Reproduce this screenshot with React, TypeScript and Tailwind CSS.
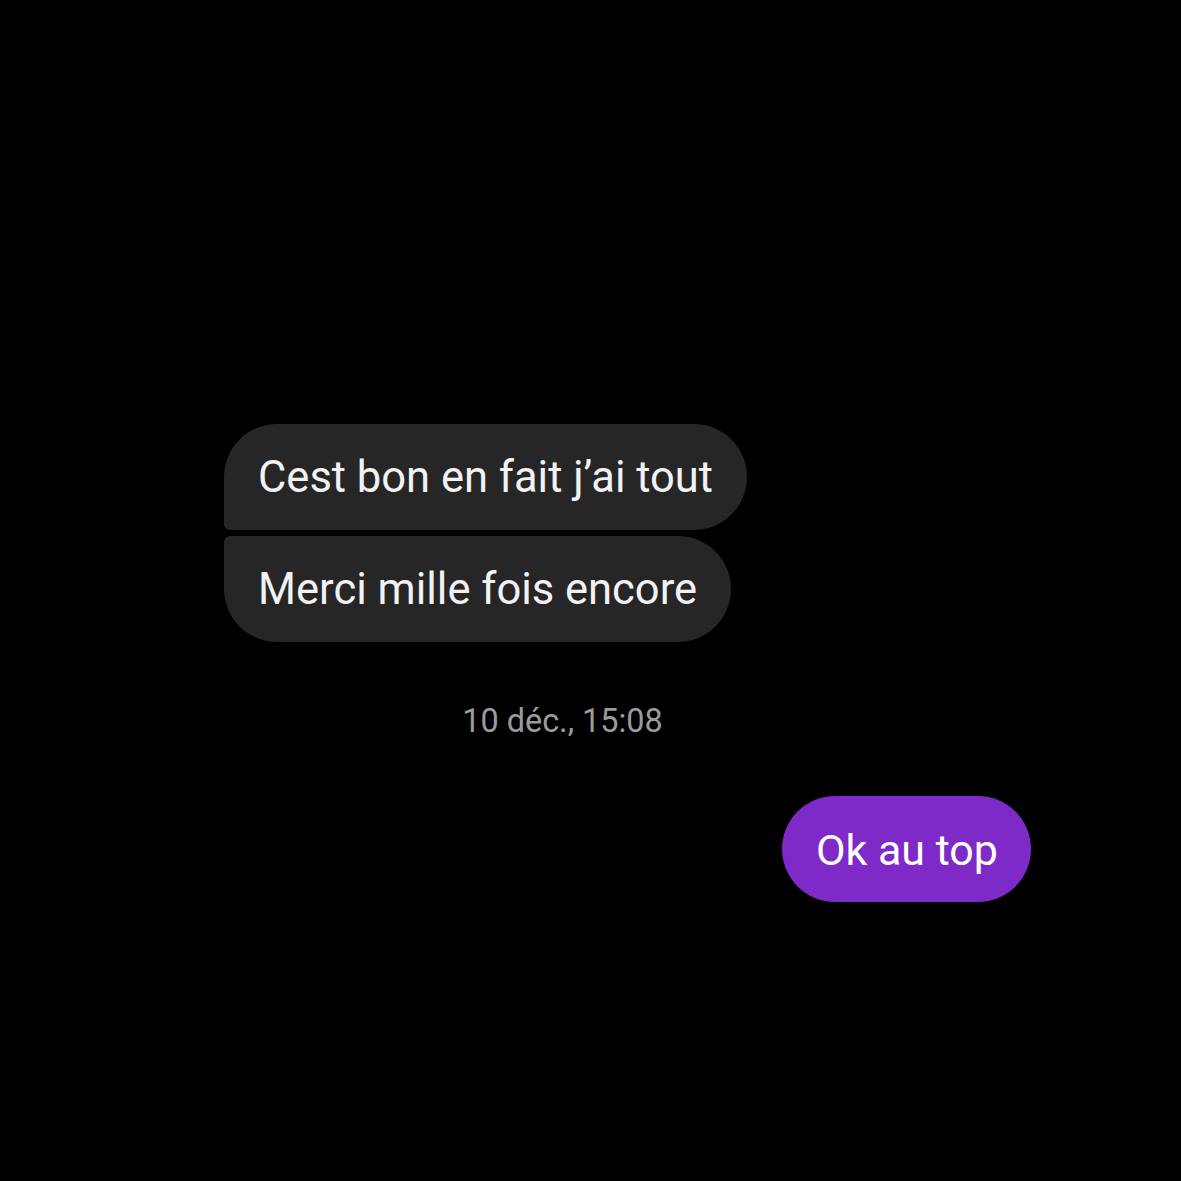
export default function App() {
  return (
    <div className="flex h-[1181px] w-[1181px] flex-col bg-black pt-[424px] font-['Roboto',sans-serif]">
      <div className="ml-[224px] flex flex-col items-start gap-[6px]">
        <div className="flex h-[106px] items-center rounded-bl-[6px] rounded-r-[53px] rounded-tl-[53px] bg-[#262626] px-[34px] pt-[2px] text-[43.5px] text-[#f2f2f2]">
          Cest bon en fait j’ai tout
        </div>
        <div className="flex h-[106px] items-center rounded-tl-[6px] rounded-r-[53px] rounded-bl-[53px] bg-[#262626] px-[34px] pt-[2px] text-[43.5px] text-[#f2f2f2]">
          Merci mille fois encore
        </div>
      </div>

      <div className="mt-[59px] flex h-[40px] items-center justify-center pr-[56px] text-[32.4px] text-[#9b9b9b]">
        10 déc., 15:08
      </div>

      <div className="mt-[55px] flex justify-end pr-[150px]">
        <div className="flex h-[106px] items-center rounded-[53px] bg-[#7e2ac8] pl-[34px] pr-[33px] pt-[2px] text-[43px] text-white">
          Ok au top
        </div>
      </div>
    </div>
  );
}
